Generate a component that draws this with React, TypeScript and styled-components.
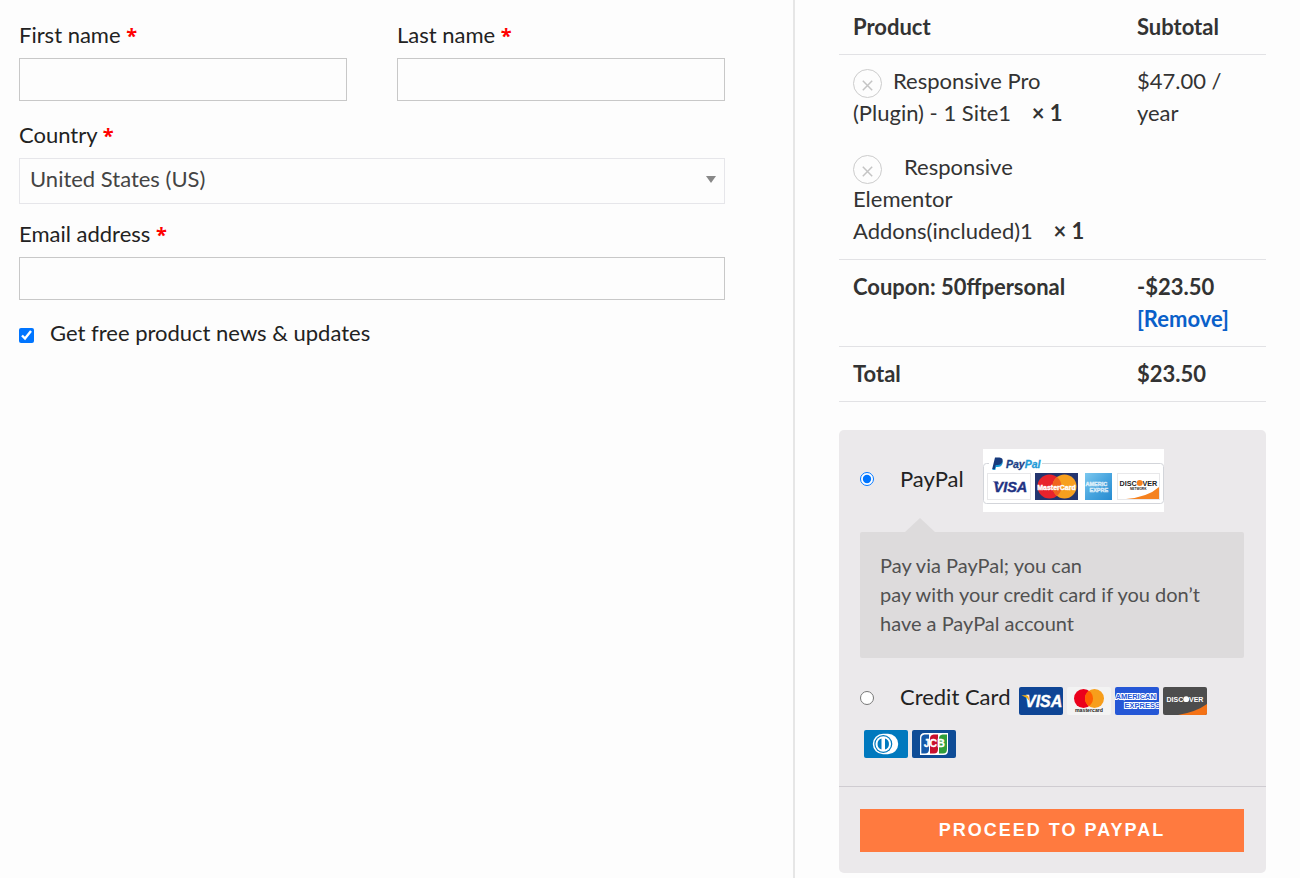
import React from "react";
import styled, { createGlobalStyle } from "styled-components";

const GlobalStyle = createGlobalStyle`
  *, *::before, *::after { box-sizing: border-box; }
  body {
    margin: 0;
    background: #fdfdfd;
    color: #222;
    font: 400 22px/32px Lato, "Open Sans", sans-serif;
  }
`;

const Page = styled.main`
  display: grid;
  grid-template-columns: 795fr 505fr;
  min-height: 100vh;
`;

const Billing = styled.form`
  display: flex;
  flex-direction: column;
  gap: 14px;
  padding: 19px 68px 19px 19px;
  border-right: 2px solid #e6e6e6;
`;

const NameRow = styled.div`
  display: grid;
  grid-template-columns: 1fr 1fr;
  gap: 50px;
`;

const Field = styled.div`
  display: flex;
  flex-direction: column;
  gap: 7px;
`;

const Required = styled.abbr`
  color: #f00;
  font-family: "Open Sans", sans-serif;
  font-size: 20px;
  font-weight: 700;
  line-height: 20px;
  text-decoration: none;
`;

const TextInput = styled.input`
  width: 100%;
  height: 43px;
  margin: 0 0 4px;
  padding: 0 10px;
  border: 1px solid #c8c8c8;
  border-radius: 0;
  background: transparent;
  font: inherit;
`;

const SelectWrap = styled.div`
  position: relative;
`;

const Select = styled.select`
  display: block;
  width: 100%;
  height: 46px;
  padding: 0 30px 5px 10px;
  appearance: none;
  border: 1px solid #e6e6ea;
  border-radius: 0;
  background: transparent;
  color: #444;
  font: inherit;
`;

const Arrow = styled.svg`
  position: absolute;
  top: 18px;
  right: 9px;
  pointer-events: none;
`;

const CheckLabel = styled.label`
  display: flex;
  align-items: center;
  gap: 16px;
  line-height: 30px;
`;

const Tick = styled.input`
  width: 15px;
  height: 15px;
  margin: 4px 0 0;
  accent-color: #0075ff;
`;

const Order = styled.section`
  padding: 0 34px 5px 44px;
`;

const OrderTable = styled.table`
  width: 100%;
  table-layout: fixed;
  border-collapse: separate;
  border-spacing: 0;
  color: #333;

  th, td {
    padding: 11px 14px;
    border-bottom: 1px solid #e2e2e5;
    text-align: left;
    vertical-align: top;
  }
  td { padding: 10px 14px 12px; }
  th:last-child, td:last-child { padding-right: 0; }
`;

const ProductCol = styled.col`
  width: 66.5%;
`;

const Item = styled.div`
  & + & { margin-top: 22px; }
`;

const RemoveItem = styled.button<{ $gap: number }>`
  display: inline-flex;
  align-items: center;
  justify-content: center;
  width: 29px;
  height: 29px;
  margin: 4px ${(p) => p.$gap}px -1px 0;
  padding: 4px 0 0;
  border: 1px solid #ccc;
  border-radius: 50%;
  background: transparent;
  vertical-align: top;
`;

const Quantity = styled.strong`
  margin-left: 15px;
`;

const RemoveLink = styled.a`
  color: #0a60c9;
  text-decoration: none;
`;

const Payment = styled.div`
  margin-top: 28px;
  border-radius: 5px;
  background: #ebe9eb;
`;

const Methods = styled.div`
  padding: 19px 22px 25px 21px;
  border-bottom: 1px solid #cfccd1;
`;

const PayPalRow = styled.label`
  display: flex;
  align-items: center;
  height: 63px;
  padding-bottom: 3px;

  svg { margin-bottom: -3px; }
`;

const CardRow = styled.label`
  display: block;
  margin-top: 17px;
  line-height: 43px;
`;

const Radio = styled.input`
  width: 14px;
  height: 14px;
  margin: 0 26px 0 0;
  accent-color: #0075ff;
`;

const MethodName = styled.span<{ $width: number }>`
  display: inline-block;
  min-width: ${(p) => p.$width}px;
`;

const Description = styled.p`
  position: relative;
  margin: 20px 0 0;
  padding: 19px 20px 20px;
  border-radius: 2px;
  background: #dddbdc;
  color: #515151;
  font-size: 20px;
  line-height: 29px;

  &::before {
    content: "";
    position: absolute;
    top: -14px;
    left: 45px;
    border: 15px solid transparent;
    border-top: 0;
    border-bottom: 14px solid #dddbdc;
  }
`;

const Card = styled.svg`
  margin: 4px 0 0 4px;
  vertical-align: middle;
`;

const PlaceOrder = styled.div`
  padding: 22px 22px 21px 21px;
`;

const PlaceButton = styled.button`
  display: block;
  width: 100%;
  height: 43px;
  padding: 0;
  border: 0;
  background: #ff7a3f;
  color: #fff;
  font: 700 18px/43px "Liberation Sans", Arial, sans-serif;
  letter-spacing: 2px;
  text-transform: uppercase;
`;

const sans = '"Liberation Sans", Arial, sans-serif';

function Cross() {
  return (
    <svg width="11" height="11" viewBox="0 0 11 11" aria-hidden="true">
      <path d="M.8.8l9.4 9.4M10.2.8L.8 10.2" stroke="#c4c4c4" strokeWidth="1.5" />
    </svg>
  );
}

function PayPalMarks() {
  return (
    <svg width="181" height="63" viewBox="0 0 181 63" role="img" aria-label="PayPal acceptance mark">
      <path fill="#fff" d="M0 0h181v63H0z" />
      <rect x=".5" y="14.5" width="180" height="40" rx="3" fill="none" stroke="#d3d5da" />
      <path fill="#fff" d="M6 8h53v12H6z" />
      <path fill="#179bd7" d="M13 10.500h4.500q3 1 2 4-1 3.500-5 3.500h-1.500l-.7 3h-3z" />
      <path fill="#173a7c" d="M12 8.500h4.500q4 .5 3 4-1 3.500-5 3.500h-1.800l-.8 4H9.200z" />
      <text x="23" y="18.500" fontFamily={sans} fontSize="10.500" fontWeight="700" fontStyle="italic" fill="#1d3f86" stroke="#1d3f86" strokeWidth=".3">
        Pay<tspan fill="#1f9bd8" stroke="#1f9bd8">Pal</tspan>
      </text>
      <rect x="4.500" y="24.500" width="43" height="26" fill="#fff" stroke="#e8e8ea" />
      <text x="10.500" y="43" fontFamily={sans} fontSize="14.500" fontWeight="700" fontStyle="italic" fill="#1f3283" stroke="#1f3283" strokeWidth=".4">VISA</text>
      <path fill="#1f3283" d="M9.500 32.500h5.500l1 3z" />
      <path fill="#24356f" d="M52 24h43v27H52z" />
      <circle cx="66.500" cy="37.500" r="12" fill="#e8232c" />
      <circle cx="81.500" cy="37.500" r="12" fill="#f7a01f" />
      <path fill="#f0641f" d="M74 28.100a12 12 0 0 1 0 18.800 12 12 0 0 1 0-18.800z" />
      <text x="73.500" y="40.500" textAnchor="middle" fontFamily={sans} fontSize="7" fontWeight="700" fill="#fff" stroke="#fff" strokeWidth=".4">MasterCard</text>
      <linearGradient id="amex" x2="1" y2="1">
        <stop stopColor="#7cc8ef" />
        <stop offset=".5" stopColor="#48a5df" />
        <stop offset="1" stopColor="#268bd0" />
      </linearGradient>
      <path fill="url(#amex)" d="M102 24h27v27h-27z" />
      <g fontFamily={sans} fontSize="5.500" fontWeight="700" fill="#fff" stroke="#fff" strokeWidth=".4" opacity=".8">
        <text x="102.500" y="37">AMERIC</text>
        <text x="106.500" y="42.500">EXPRE</text>
      </g>
      <rect x="134.500" y="24.500" width="42" height="26" fill="#fff" stroke="#e8e8ea" />
      <path fill="#f58220" d="M176 38v12h-33q22-2 33-12z" />
      <circle cx="156.700" cy="34" r="3" fill="#f58220" />
      <g fontFamily={sans} fontWeight="700" fill="#222">
        <text x="136.500" y="36.700" fontSize="7.200">DISC</text>
        <text x="159.500" y="36.700" fontSize="7.200">VER</text>
        <text x="147" y="41" fontSize="3.200">NETWORK</text>
      </g>
    </svg>
  );
}

function CardFrame({ label, fill, children }: { label: string; fill: string; children: React.ReactNode }) {
  return (
    <Card width="44" height="28" viewBox="0 0 44 28" role="img" aria-label={label}>
      <rect width="44" height="28" rx="2" fill={fill} />
      {children}
    </Card>
  );
}

function Visa() {
  return (
    <CardFrame label="Visa" fill="#0e4595">
      <text x="6" y="20" fontFamily={sans} fontSize="16" fontWeight="700" fontStyle="italic" fill="#fff" stroke="#fff" strokeWidth=".4">VISA</text>
      <path fill="#f2ae14" d="M2.500 8.300h5q1.500 0 1.900 1.500l1 4.200Q7.500 10 2.500 8.300z" />
    </CardFrame>
  );
}

function Mastercard() {
  return (
    <CardFrame label="Mastercard" fill="#f3f3f3">
      <circle cx="16.500" cy="11.500" r="9.500" fill="#eb001b" />
      <circle cx="27.500" cy="11.500" r="9.500" fill="#f79e1b" />
      <path fill="#ff5f00" d="M22 3.750a9.500 9.500 0 0 1 0 15.500 9.500 9.500 0 0 1 0-15.500z" />
      <text x="22" y="25.200" textAnchor="middle" fontFamily={sans} fontSize="5.200" fontWeight="700" fill="#231f20">mastercard</text>
    </CardFrame>
  );
}

function Amex() {
  return (
    <CardFrame label="American Express" fill="#2557d6">
      <g fontFamily={sans} fontSize="7.500" fontWeight="700" fill="#2557d6" stroke="#fff" strokeWidth="2" paintOrder="stroke">
        <text x=".5" y="12">AMERICAN</text>
        <text x="9.500" y="21.200">EXPRESS</text>
      </g>
    </CardFrame>
  );
}

function Discover() {
  return (
    <CardFrame label="Discover" fill="#4d4d4d">
      <path fill="#f47216" d="M44 17v9q0 2-2 2H15q18-3 29-11z" />
      <circle cx="23.200" cy="12.200" r="2.900" fill="#fff" />
      <g fontFamily={sans} fontSize="7" fontWeight="700" fill="#fff">
        <text x="3.500" y="14.800">DISC</text>
        <text x="26" y="14.800">VER</text>
      </g>
    </CardFrame>
  );
}

function Diners() {
  return (
    <CardFrame label="Diners Club" fill="#0079be">
      <path fill="#fff" d="M19 3.800h5a10.200 10.200 0 0 1 0 20.400h-5a10.200 10.200 0 0 1 0-20.400z" />
      <circle cx="19.300" cy="14" r="9" fill="#0079be" />
      <circle cx="19.300" cy="14" r="7.800" fill="#fff" />
      <path fill="#0079be" d="M17.500 8.500v11a5.800 5.800 0 0 1 0-11zM21 8.500a5.800 5.800 0 0 1 0 11z" />
    </CardFrame>
  );
}

function Jcb() {
  return (
    <CardFrame label="JCB" fill="#0e4c96">
      <path fill="#fff" d="M12.500 3H36v17.500Q36 25 31.500 25H8V7.500Q8 3 12.500 3z" />
      <path fill="#1558a8" d="M12.500 4.500H17V19q0 4.500-4 4.500H9.300V8q0-3 3.200-3.500z" />
      <path fill="#c8102e" d="M21.500 4.500H26V19q0 4.500-4 4.500h-4V8.500q0-3.500 3.500-4z" />
      <path fill="#2f9e3a" d="M30.500 4.500H35V19q0 4.500-4 4.500h-4V8.500q0-3.500 3.500-4z" />
      <text x="22.300" y="17.300" textAnchor="middle" fontFamily={sans} fontSize="10.500" fontWeight="700" fill="#fff" stroke="#fff" strokeWidth=".3">JCB</text>
    </CardFrame>
  );
}

function RequiredMark() {
  return <Required title="required">*</Required>;
}

export default function App() {
  return (
    <>
      <GlobalStyle />
      <Page>
        <Billing>
          <NameRow>
            <Field>
              <label htmlFor="first">First name <RequiredMark /></label>
              <TextInput id="first" type="text" />
            </Field>
            <Field>
              <label htmlFor="last">Last name <RequiredMark /></label>
              <TextInput id="last" type="text" />
            </Field>
          </NameRow>
          <Field>
            <label htmlFor="country">Country <RequiredMark /></label>
            <SelectWrap>
              <Select id="country" defaultValue="US">
                <option value="US">United States (US)</option>
              </Select>
              <Arrow width="10" height="7" viewBox="0 0 10 7" aria-hidden="true">
                <path d="M0 0h10L5 7z" fill="#888" />
              </Arrow>
            </SelectWrap>
          </Field>
          <Field>
            <label htmlFor="email">Email address <RequiredMark /></label>
            <TextInput id="email" type="email" />
          </Field>
          <CheckLabel>
            <Tick type="checkbox" defaultChecked />
            Get free product news &amp; updates
          </CheckLabel>
        </Billing>

        <Order>
          <OrderTable>
            <colgroup>
              <ProductCol />
              <col />
            </colgroup>
            <thead>
              <tr>
                <th scope="col">Product</th>
                <th scope="col">Subtotal</th>
              </tr>
            </thead>
            <tbody>
              <tr>
                <td>
                  <Item>
                    <RemoveItem type="button" aria-label="Remove Responsive Pro" $gap={11}><Cross /></RemoveItem>
                    Responsive Pro<br />
                    (Plugin) - 1 Site1 <Quantity>× 1</Quantity>
                  </Item>
                  <Item>
                    <RemoveItem type="button" aria-label="Remove Responsive Elementor Addons" $gap={22}><Cross /></RemoveItem>
                    Responsive<br />
                    Elementor<br />
                    Addons(included)1 <Quantity>× 1</Quantity>
                  </Item>
                </td>
                <td>$47.00 /<br />year</td>
              </tr>
              <tr>
                <th scope="row">Coupon: 50ffpersonal</th>
                <th>-$23.50<br /><RemoveLink href="#remove">[Remove]</RemoveLink></th>
              </tr>
              <tr>
                <th scope="row">Total</th>
                <th>$23.50</th>
              </tr>
            </tbody>
          </OrderTable>

          <Payment>
            <Methods>
              <PayPalRow>
                <Radio type="radio" name="method" defaultChecked />
                <MethodName $width={83}>PayPal</MethodName>
                <PayPalMarks />
              </PayPalRow>
              <Description>
                Pay via PayPal; you can<br />
                pay with your credit card if you don’t<br />
                have a PayPal account
              </Description>
              <CardRow>
                <Radio type="radio" name="method" />
                <MethodName $width={115}>Credit Card</MethodName>
                <Visa /><Mastercard /><Amex /><Discover /><Diners /><Jcb />
              </CardRow>
            </Methods>
            <PlaceOrder>
              <PlaceButton type="button">Proceed to PayPal</PlaceButton>
            </PlaceOrder>
          </Payment>
        </Order>
      </Page>
    </>
  );
}
